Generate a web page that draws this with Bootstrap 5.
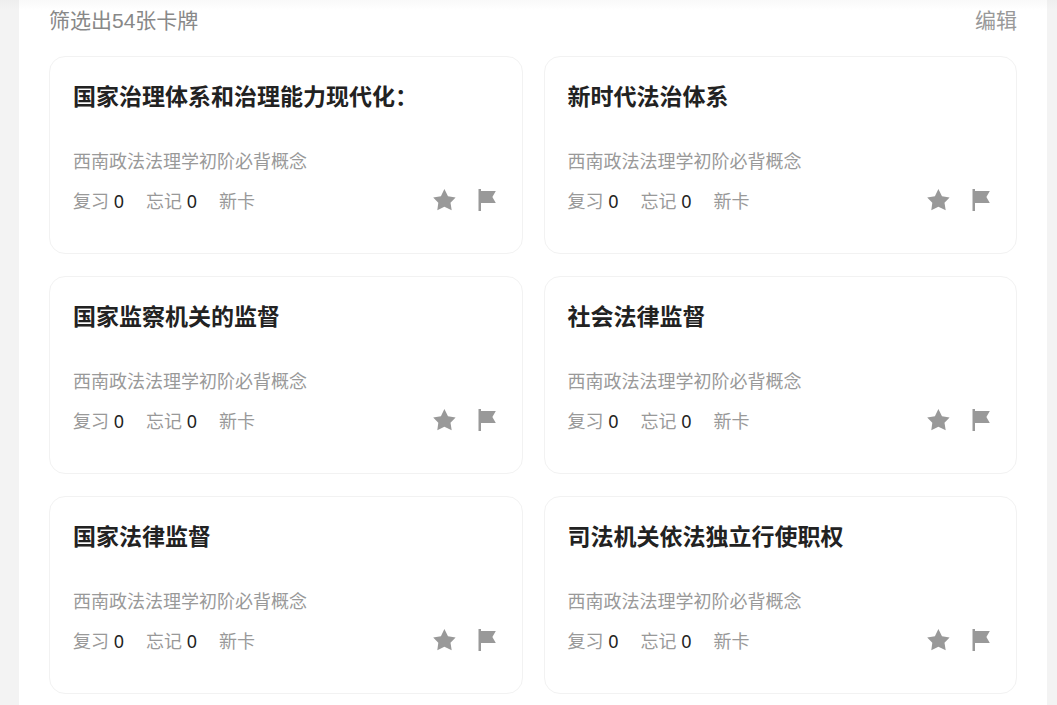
<!DOCTYPE html>
<html lang="zh-CN">
<head>
<meta charset="utf-8">
<meta name="viewport" content="width=device-width, initial-scale=1">
<title>卡牌</title>
<link href="https://cdn.jsdelivr.net/npm/bootstrap@5.3.0/dist/css/bootstrap.min.css" rel="stylesheet">
<style>
body{background:#f3f3f3 linear-gradient(#eee,#f3f3f3) top/100% 10px no-repeat;font-family:"Liberation Sans","Noto Sans CJK SC",sans-serif;color:#999}
.panel{background:#fff linear-gradient(#f9f9f9,#fff) top/100% 10px no-repeat;margin:0 10px 0 19px;padding:8px 30px 10px;min-height:100vh}
.topbar{font-size:21px;line-height:26px;margin-bottom:22px}
.topbar .count{color:#888}
.edit-btn{font-size:21px;line-height:26px;color:#999}
.deck{display:grid;grid-template-columns:1fr 1fr;gap:22px 21px}
.flashcard{border:1px solid #f2f2f2;border-radius:16px;padding:24px 24px 39px 23px}
.flashcard h2{font-size:23px;line-height:32px;font-weight:700;color:#222;margin-bottom:36px}
.source{font-size:18px;line-height:26px;margin-bottom:13px}
.stats{font-size:18px;line-height:26px;font-family:"Noto Sans","Noto Sans CJK SC",sans-serif;gap:22px}
.stats b{font-weight:400;color:#222}
.marks{gap:18px}
.mark-btn{color:#999;line-height:0}
</style>
</head>
<body>
<main class="panel">
<header class="topbar d-flex justify-content-between"><span class="count">筛选出54张卡牌</span><button type="button" class="edit-btn btn p-0 border-0">编辑</button></header>
<section class="deck" id="deck"></section>
</main>
<script>
const titles=["国家治理体系和治理能力现代化：","新时代法治体系","国家监察机关的监督","社会法律监督","国家法律监督","司法机关依法独立行使职权"];
const star='<svg width="24" height="24" fill="currentColor" aria-hidden="true"><path d="M12.4 0L16 7.2L23.6 8.4L18.5 13.8L19.7 21.2L12.4 17.8L5.3 21.2L6.3 13.8L1.2 8.4L8.9 7.2Z"/></svg>';
const flag='<svg width="24" height="24" fill="currentColor" aria-hidden="true"><path d="M4.5 0H7V2H21.8L18.4 8L21.8 14H7V22H4.5Z"/></svg>';
document.getElementById("deck").innerHTML=titles.map(t=>`<article class="flashcard"><h2>${t}</h2><p class="source">西南政法法理学初阶必背概念</p>
<div class="stats d-flex align-items-center"><span>复习 <b>0</b></span><span>忘记 <b>0</b></span><span>新卡</span>
<div class="marks d-flex ms-auto"><button type="button" class="mark-btn btn p-0 border-0" aria-label="收藏">${star}</button><button type="button" class="mark-btn btn p-0 border-0" aria-label="标记">${flag}</button></div></div></article>`).join("");
</script>
<script src="https://cdn.jsdelivr.net/npm/bootstrap@5.3.0/dist/js/bootstrap.bundle.min.js"></script>
</body>
</html>
